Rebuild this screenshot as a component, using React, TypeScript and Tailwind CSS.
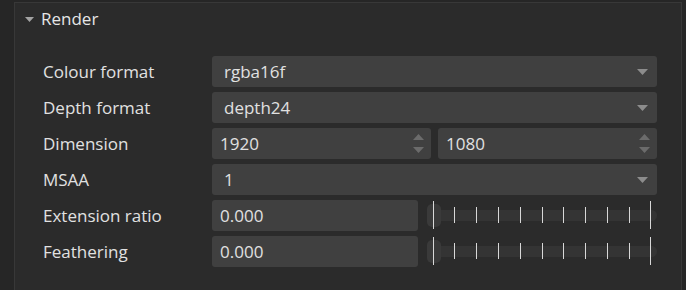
const ticks = [0, 1, 2, 3, 4, 5, 6, 7, 8, 9, 10];

const Caret = () => (
  <svg width="11" height="6" viewBox="0 0 11 6" className="shrink-0">
    <path d="M0 0h11L5.5 6z" fill="#8c8c8c" />
  </svg>
);

const Spinner = () => (
  <div className="flex flex-col gap-[7px] pr-[7px]">
    <svg width="11" height="6" viewBox="0 0 11 6">
      <path d="M0 6h11L5.5 0z" fill="#6b6b6b" />
    </svg>
    <svg width="11" height="6" viewBox="0 0 11 6">
      <path d="M0 0h11L5.5 6z" fill="#6b6b6b" />
    </svg>
  </div>
);

const Select = ({ value }: { value: string }) => (
  <div className="flex h-[31px] flex-1 items-center justify-between rounded-[3px] bg-[#404040] pl-[12px] pr-[9px]">
    <span>{value}</span>
    <Caret />
  </div>
);

const SpinBox = ({ value }: { value: string }) => (
  <div className="flex h-[31px] flex-1 items-center justify-between rounded-[3px] bg-[#404040] pl-[8px]">
    <span>{value}</span>
    <Spinner />
  </div>
);

const Slider = () => (
  <div className="relative flex h-[31px] flex-1 items-center">
    <div className="ml-[2px] h-[11px] flex-1 rounded-full bg-[#343434]" />
    <div className="absolute left-[2px] top-[4px] h-[23px] w-[14px] rounded-[5px] bg-[#3a3a3a]" />
    {ticks.map((t) => (
      <div
        key={t}
        className={
          t === 0 || t === 10
            ? "absolute top-[1px] h-[28px] w-px bg-[#d8d8d8]"
            : "absolute top-[7px] h-[16px] w-px bg-[#d8d8d8]"
        }
        style={{ left: 7.7 + t * 21.76 }}
      />
    ))}
  </div>
);

const Row = ({ label, children }: { label: string; children: React.ReactNode }) => (
  <div className="flex h-[31px] items-center">
    <div className="w-[197px] shrink-0 pl-[28px]">{label}</div>
    <div className="flex flex-1 gap-[7px]">{children}</div>
  </div>
);

export default function App() {
  return (
    <div
      className="flex h-[290px] w-[686px] bg-[#262626] text-[17px] text-[#e1e1e1]"
      style={{ fontFamily: '"Open Sans", sans-serif' }}
    >
      <div className="w-[14px] shrink-0" />
      <div className="mt-[2px] flex w-[668px] flex-col border-l border-t border-r border-[#383838] bg-[#2b2b2b]">
        <div className="flex h-[32px] items-center gap-[7px] pl-[10px]">
          <svg width="9" height="5" viewBox="0 0 9 5">
            <path d="M0 0h9L4.5 5z" fill="#a3a3a3" />
          </svg>
          <span className="text-[#e6e6e6]">Render</span>
        </div>
        <div className="mt-[21px] flex w-[642px] flex-col gap-[5px]">
          <Row label="Colour format">
            <Select value="rgba16f" />
          </Row>
          <Row label="Depth format">
            <Select value="depth24" />
          </Row>
          <Row label="Dimension">
            <SpinBox value="1920" />
            <SpinBox value="1080" />
          </Row>
          <Row label="MSAA">
            <Select value="1" />
          </Row>
          <Row label="Extension ratio">
            <div className="flex h-[31px] w-[206px] items-center rounded-[3px] bg-[#404040] pl-[8px]">0.000</div>
            <Slider />
          </Row>
          <Row label="Feathering">
            <div className="flex h-[31px] w-[206px] items-center rounded-[3px] bg-[#404040] pl-[8px]">0.000</div>
            <Slider />
          </Row>
        </div>
      </div>
    </div>
  );
}
